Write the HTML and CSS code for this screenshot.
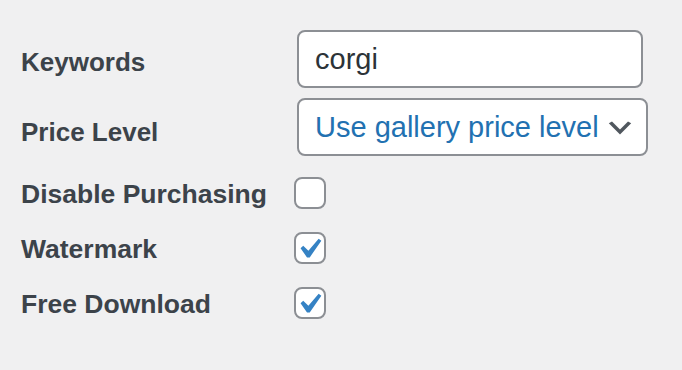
FILE: index.html
```html
<!DOCTYPE html>
<html lang="en">
<head>
<meta charset="utf-8">
<title>Image settings</title>
<link rel="stylesheet" href="styles.css">
</head>
<body>
<div class="form">
  <div class="fields">
    <div class="row">
      <label class="label" for="kw">Keywords</label>
      <input id="kw" class="text-input" type="text" value="corgi">
    </div>
    <div class="row row-select">
      <label class="label" for="pl">Price Level</label>
      <div class="select-wrap">
        <select id="pl" class="select"><option>Use gallery price level</option></select>
        <svg class="chevron" viewBox="0 0 20 20" aria-hidden="true"><path d="M5 6l5 5 5-5 2 1-7 7-7-7 2-1z"/></svg>
      </div>
    </div>
  </div>
  <div class="checks">
    <div class="row check-row">
      <span class="label">Disable Purchasing</span>
      <span class="checkbox"></span>
    </div>
    <div class="row check-row">
      <span class="label">Watermark</span>
      <span class="checkbox"><svg class="tick" viewBox="0 0 20 20" aria-hidden="true"><path d="M14.83 4.89l1.34.94-5.81 8.38H9.02L5.78 9.67l1.34-1.25 2.57 2.4z"/></svg></span>
    </div>
    <div class="row check-row">
      <span class="label">Free Download</span>
      <span class="checkbox"><svg class="tick" viewBox="0 0 20 20" aria-hidden="true"><path d="M14.83 4.89l1.34.94-5.81 8.38H9.02L5.78 9.67l1.34-1.25 2.57 2.4z"/></svg></span>
    </div>
  </div>
</div>
</body>
</html>
```

FILE: styles.css
```css
html, body {
  margin: 0;
  padding: 0;
  background: #f0f0f1;
}

body {
  font-family: "Liberation Sans", Arial, sans-serif;
  color: #3c434a;
}

.form {
  padding: 30px 0 40px 21px;
}

.fields {
  display: flex;
  flex-direction: column;
  gap: 10px;
}

.row {
  display: grid;
  grid-template-columns: 276px auto;
  align-items: center;
  height: 58px;
}

.label {
  font-size: 26px;
  font-weight: bold;
  line-height: 32px;
  color: #3c434a;
  padding-top: 5px;
}

.check-row .label {
  font-size: 26.5px;
}

.row-select .label {
  padding-top: 9px;
}

.text-input {
  box-sizing: border-box;
  width: 346px;
  height: 58px;
  margin: 0;
  padding: 0 16px;
  border: 2px solid #8c8f94;
  border-radius: 8px;
  background: #fff;
  font-family: "Liberation Sans", Arial, sans-serif;
  font-size: 29px;
  color: #2c3338;
  outline: none;
}

.select-wrap {
  position: relative;
  width: 351px;
  height: 58px;
}

.select {
  box-sizing: border-box;
  width: 351px;
  height: 58px;
  margin: 0;
  padding: 0 48px 0 16px;
  border: 2px solid #8c8f94;
  border-radius: 8px;
  background: #fff;
  font-family: "Liberation Sans", Arial, sans-serif;
  font-size: 29px;
  color: #2271b1;
  -webkit-appearance: none;
  appearance: none;
  outline: none;
}

.chevron {
  position: absolute;
  right: 12px;
  top: 14px;
  width: 32px;
  height: 32px;
  fill: #50575e;
  pointer-events: none;
}

.checks {
  margin-top: 19px;
  display: flex;
  flex-direction: column;
  gap: 23px;
}

.check-row {
  height: 32px;
}

.check-row .label {
  padding-top: 3px;
}

.checkbox {
  position: relative;
  box-sizing: border-box;
  display: block;
  width: 32px;
  height: 32px;
  margin-left: -3px;
  border: 2px solid #8c8f94;
  border-radius: 8px;
  background: #fff;
}

.tick {
  position: absolute;
  left: -7px;
  top: -5px;
  width: 40px;
  height: 40px;
  fill: #3582c4;
}
```
